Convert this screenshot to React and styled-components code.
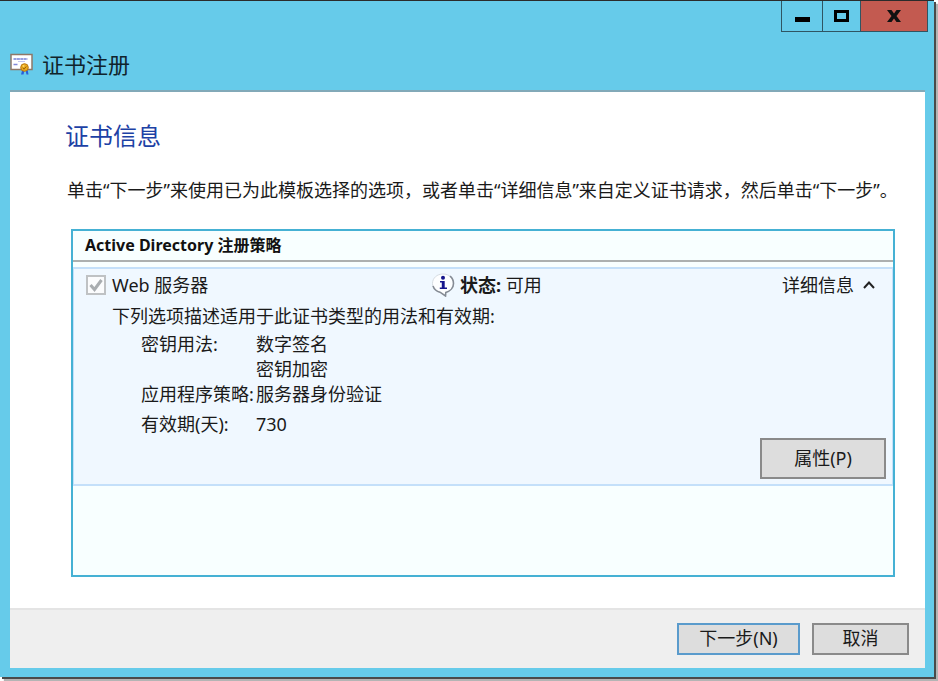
import React, { useState } from "react";
import styled, { createGlobalStyle } from "styled-components";

const GlobalStyle = createGlobalStyle`
  * { box-sizing: border-box; }
  body {
    margin: 0;
    background: #ffffff;
    color: #1a1a1a;
    font-family: "Noto Sans", "Noto Sans CJK SC", sans-serif;
    font-size: 18px;
    line-height: 24px;
  }
  button, input { font: inherit; color: inherit; margin: 0; }
`;

const Desktop = styled.div`
  display: flex;
  min-height: 100vh;
  padding: 0 4px 4px 0;
`;

const Window = styled.main`
  flex: 1;
  display: flex;
  flex-direction: column;
  min-width: 0;
  border-top: 1px solid #2b2b2b;
  background: #66cbea;
  padding: 0 9px 9px 10px;
  box-shadow: 2px 2px 0 #4a4a4a, 4px 4px 1px #b4b4b4;
`;

const TitleBar = styled.header`
  display: flex;
  justify-content: space-between;
  align-items: flex-start;
  height: 89px;
  margin-right: -3px;
`;

const Title = styled.h1`
  display: flex;
  align-items: center;
  gap: 9px;
  margin: 47px 0 0;
  font-size: 22px;
  font-weight: 400;
  line-height: 32px;
  color: #10242c;
`;

const WindowControls = styled.div`
  display: flex;
`;

const ControlButton = styled.button`
  display: grid;
  place-items: center;
  width: ${(p) => p.$width}px;
  height: 31px;
  padding: 0;
  border: 1px solid #2f5563;
  border-top: 0;
  border-right-width: ${(p) => (p.$close ? "1px" : "0")};
  background: ${(p) => (p.$close ? "#c35a50" : "transparent")};
`;

const Panel = styled.section`
  flex: 1;
  display: flex;
  flex-direction: column;
  border-top: 2px solid #82a9b8;
  background: #ffffff;
`;

const Content = styled.div`
  flex: 1;
  display: flex;
  flex-direction: column;
  padding: 28px 30px 31px 61px;
`;

const Heading = styled.h2`
  margin: 0 0 26px -6px;
  font-size: 24px;
  font-weight: 400;
  line-height: 32px;
  color: #1d41a5;
`;

const Instruction = styled.p`
  margin: 0 -24px 27px -4px;
`;

const TemplateList = styled.div`
  flex: 1;
  border: 2px solid #45b1d4;
  background: #f8ffff;
`;

const PolicyName = styled.h3`
  margin: 0 0 5px;
  padding: 2px 12px 3px;
  border-bottom: 2px solid #acb0b0;
  font-size: 16px;
  line-height: 24px;
  color: #111111;
`;

const Template = styled.section`
  display: flex;
  flex-direction: column;
  padding: 4px 6px 5px;
  border: 2px solid #c4e0fa;
  border-left-width: 1px;
  border-right-width: 1px;
  background: #f0f8ff;
`;

const Summary = styled.div`
  display: grid;
  grid-template-columns: 345px 1fr auto;
  align-items: center;
  padding: 0 10px 0 6px;
`;

const CheckLabel = styled.label`
  display: flex;
  align-items: center;
  gap: 6px;
`;

const CheckMark = styled.span`
  display: grid;
  place-items: center;
  > * { grid-area: 1 / 1; }
`;

const CheckBox = styled.input`
  appearance: none;
  width: 20px;
  height: 20px;
  border: 2px solid #bfc2c4;
  background: #fbfcfd;
`;

const Status = styled.div`
  display: flex;
  align-items: center;
  gap: 5px;
`;

const DetailsToggle = styled.button`
  display: flex;
  align-items: center;
  gap: 8px;
  padding: 0;
  border: 0;
  background: none;
`;

const Description = styled.p`
  margin: 7px 0 4px 32px;
`;

const Usage = styled.dl`
  display: grid;
  grid-template-columns: 115px 1fr;
  row-gap: 1px;
  margin: 0 0 2px 61px;
`;

const Term = styled.dt`
  white-space: nowrap;
  padding-top: ${(p) => (p.$spaced ? 5 : 0)}px;
`;

const Value = styled.dd`
  margin: 0;
  padding-top: ${(p) => (p.$spaced ? 5 : 0)}px;
`;

const ValueLine = styled.span`
  display: block;
  & + & { margin-top: 1px; }
`;

const PushButton = styled.button`
  min-width: ${(p) => p.$width}px;
  height: ${(p) => (p.$tall ? 41 : 32)}px;
  padding: 0 10px 2px;
  border: 2px solid ${(p) => (p.$primary ? "#5a9bcc" : "#8a8a8a")};
  background: #dddddd;
  line-height: 24px;
`;

const TemplateActions = styled.div`
  display: flex;
  justify-content: flex-end;
`;

const Footer = styled.footer`
  display: flex;
  justify-content: flex-end;
  gap: 12px;
  padding: 13px 16px 13px;
  border-top: 2px solid #e4e4e4;
  background: #efefef;
`;

const CertificateIcon = () => (
  <svg width="23" height="22" viewBox="0 0 23 22" aria-hidden="true">
    <rect x="1" y="1.500" width="21" height="15" fill="#fff" stroke="#8f7868" strokeWidth="1.500" />
    <path d="M3.500 6h14" stroke="#7780d8" strokeWidth="1.500" strokeDasharray="3 .4" />
    <path d="M8 8.500h7" stroke="#c3c6ef" />
    <path d="M3.500 11.500h4" stroke="#8088d8" strokeWidth="1.500" />
    <path d="M12.500 16l-1.500 5.500h2.500l1-4zM15.500 17l1 4.500h2l-1-5.500z" fill="#2760dc" />
    <circle cx="14.500" cy="14.500" r="3.800" fill="#e9a91c" stroke="#bb7810" />
    <path d="M12.800 14.700l1.200 1.500 2.300-2.700" fill="none" stroke="#9a6208" />
    <circle cx="13.500" cy="13" r="1" fill="#ffd966" />
  </svg>
);

const InfoIcon = () => (
  <svg width="24" height="24" viewBox="0 0 24 24" aria-hidden="true">
    <path d="M12 1C6 1 1.500 5 1.500 10.500c0 4 3 7.500 7.500 8.700L14.500 23l.3-3.600c4.500-1.200 7.700-4.700 7.700-8.900C22.500 5 18 1 12 1z" fill="#fdfeff" stroke="#d7dde3" />
    <path d="M2 13c1.200 3.500 4 5.500 7 6.200L14.500 23l.3-3.600c4.500-1.200 7.700-4.700 7.700-8.900 0-3-1.200-5.500-3.500-7.300" fill="none" stroke="#858b94" strokeWidth="1.600" />
    <circle cx="12" cy="4.800" r="2" fill="#15158c" />
    <path d="M9 8h4.700v6.500H16V16H8.800v-1.500h2V9.500H9z" fill="#15158c" />
  </svg>
);

export default function App() {
  const [open, setOpen] = useState(true);
  return (
    <>
      <GlobalStyle />
      <Desktop>
        <Window>
          <TitleBar>
            <Title>
              <CertificateIcon />
              证书注册
            </Title>
            <WindowControls>
              <ControlButton $width={41} aria-label="最小化">
                <svg width="15" height="14" aria-hidden="true">
                  <rect y="8" width="15" height="5" fill="#000" />
                </svg>
              </ControlButton>
              <ControlButton $width={38} aria-label="最大化">
                <svg width="15" height="12" aria-hidden="true">
                  <rect x="1.500" y="1.500" width="12" height="9" fill="none" stroke="#000" strokeWidth="3" />
                </svg>
              </ControlButton>
              <ControlButton $width={68} $close aria-label="关闭">
                <svg width="14" height="12" aria-hidden="true">
                  <path d="M0 0h4.500L7 3.500 9.500 0H14L9.500 6 14 12H9.500L7 8.500 4.500 12H0l4.500-6z" fill="#111" />
                </svg>
              </ControlButton>
            </WindowControls>
          </TitleBar>
          <Panel>
            <Content>
              <Heading>证书信息</Heading>
              <Instruction>
                单击“下一步”来使用已为此模板选择的选项，或者单击“详细信息”来自定义证书请求，然后单击“下一步”。
              </Instruction>
              <TemplateList>
                <PolicyName>Active Directory 注册策略</PolicyName>
                <Template>
                  <Summary>
                    <CheckLabel>
                      <CheckMark>
                        <CheckBox type="checkbox" checked disabled readOnly />
                        <svg width="14" height="14" aria-hidden="true">
                          <path d="M1.500 7l4 4.500L12.500 2" fill="none" stroke="#a9adb0" strokeWidth="3" />
                        </svg>
                      </CheckMark>
                      Web 服务器
                    </CheckLabel>
                    <Status>
                      <InfoIcon />
                      <span>
                        <strong>状态:</strong> 可用
                      </span>
                    </Status>
                    <DetailsToggle aria-expanded={open} onClick={() => setOpen(!open)}>
                      详细信息
                      <svg width="14" height="10" aria-hidden="true">
                        <path d={open ? "M2 8l5-5.500L12 8" : "M2 2.500L7 8l5-5.500"} fill="none" stroke="#222" strokeWidth="2" />
                      </svg>
                    </DetailsToggle>
                  </Summary>
                  {open && (
                    <>
                      <Description>下列选项描述适用于此证书类型的用法和有效期:</Description>
                      <Usage>
                        <Term>密钥用法:</Term>
                        <Value>
                          <ValueLine>数字签名</ValueLine>
                          <ValueLine>密钥加密</ValueLine>
                        </Value>
                        <Term>应用程序策略:</Term>
                        <Value>服务器身份验证</Value>
                        <Term $spaced>有效期(天):</Term>
                        <Value $spaced>730</Value>
                      </Usage>
                      <TemplateActions>
                        <PushButton $width={126} $tall>属性(P)</PushButton>
                      </TemplateActions>
                    </>
                  )}
                </Template>
              </TemplateList>
            </Content>
            <Footer>
              <PushButton $width={123} $primary>下一步(N)</PushButton>
              <PushButton $width={97}>取消</PushButton>
            </Footer>
          </Panel>
        </Window>
      </Desktop>
    </>
  );
}
